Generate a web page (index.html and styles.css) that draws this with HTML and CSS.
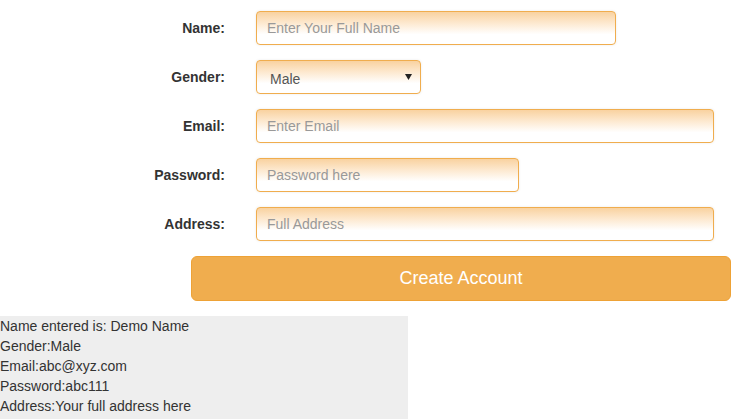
FILE: index.html
```html
<!DOCTYPE html>
<html>
<head>
<meta charset="utf-8">
<link rel="stylesheet" href="styles.css">
</head>
<body>
<form class="form">
  <div class="row">
    <label class="lbl">Name:</label>
    <input class="field w-name" type="text" placeholder="Enter Your Full Name">
  </div>
  <div class="row">
    <label class="lbl">Gender:</label>
    <select class="field select w-gender">
      <option>Male</option>
      <option>Female</option>
    </select>
  </div>
  <div class="row">
    <label class="lbl">Email:</label>
    <input class="field w-wide" type="text" placeholder="Enter Email">
  </div>
  <div class="row">
    <label class="lbl">Password:</label>
    <input class="field w-pass" type="password" placeholder="Password here">
  </div>
  <div class="row">
    <label class="lbl">Address:</label>
    <input class="field w-wide" type="text" placeholder="Full Address">
  </div>
  <div class="btn-row">
    <button type="button" class="btn">Create Account</button>
  </div>
</form>
<div class="output">
  <div>Name entered is: Demo Name</div>
  <div>Gender:Male</div>
  <div>Email:abc@xyz.com</div>
  <div>Password:abc111</div>
  <div>Address:Your full address here</div>
</div>
</body>
</html>
```
FILE: styles.css
```css
html, body {
  margin: 0;
  padding: 0;
  background: #fff;
  font-family: "Liberation Sans", Arial, sans-serif;
  color: #333;
  font-size: 14px;
}
.form {
  padding-top: 11px;
  display: flex;
  flex-direction: column;
  gap: 15px;
}
.row {
  display: grid;
  grid-template-columns: 225px auto;
  column-gap: 31px;
  align-items: center;
  justify-content: start;
}
.lbl {
  text-align: right;
  font-weight: bold;
  font-size: 14px;
  color: #333;
}
.field {
  box-sizing: border-box;
  height: 34px;
  margin: 0;
  padding: 0 10px;
  border: 1px solid #f0ad4e;
  border-radius: 4px;
  font-family: "Liberation Sans", Arial, sans-serif;
  font-size: 14px;
  color: #555;
  background: linear-gradient(to bottom, #f9d2a0 0%, #fde9d0 35%, #ffffff 70%);
  box-shadow: 0 0 3px rgba(0, 0, 0, 0.08);
  outline: none;
}
.field::placeholder {
  color: #999;
}
.select {
  -webkit-appearance: none;
  appearance: none;
  padding-left: 13px;
  padding-top: 4px;
  background:
    url("data:image/svg+xml;utf8,<svg xmlns='http://www.w3.org/2000/svg' width='7' height='6'><path d='M0 0 L7 0 L3.5 6 Z' fill='%23222'/></svg>") no-repeat right 8px center,
    linear-gradient(to bottom, #f9d2a0 0%, #fde9d0 35%, #ffffff 70%);
}
.w-name { width: 360px; }
.w-gender { width: 165px; }
.w-wide { width: 458px; }
.w-pass { width: 263px; }
.btn-row {
  padding-left: 191px;
}
.btn {
  box-sizing: border-box;
  width: 540px;
  height: 45px;
  border: 1px solid #eea236;
  border-radius: 6px;
  background: #f0ad4e;
  color: #fff;
  font-family: "Liberation Sans", Arial, sans-serif;
  font-size: 18px;
  cursor: pointer;
}
.output {
  margin-top: 15px;
  width: 408px;
  background: #eee;
  line-height: 20px;
  font-size: 14px;
  color: #333;
  padding-bottom: 10px;
}
```
